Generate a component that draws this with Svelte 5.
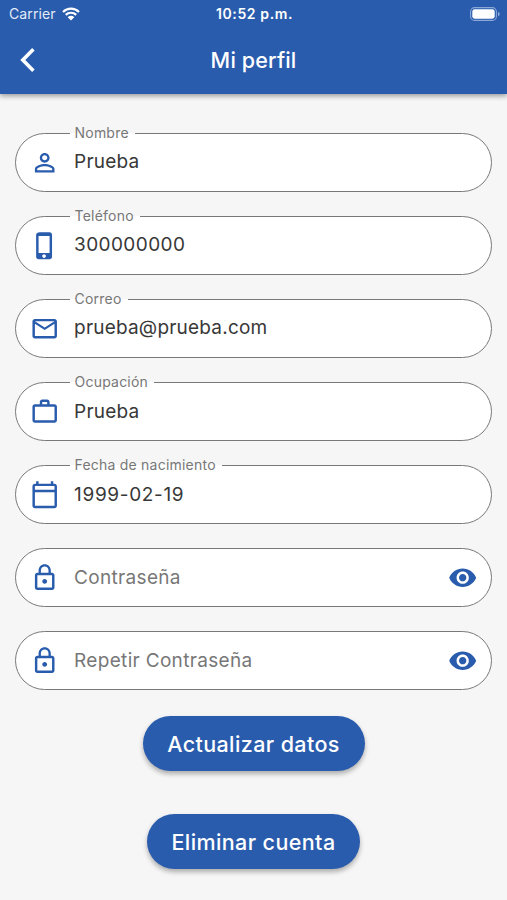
<script lang="ts">
  type Field = {
    name: string;
    label: string;
    value?: string;
    icon: string;
    type: "text" | "tel" | "email" | "date" | "password";
  };

  const icons = {
    person:
      "M12 5.9c1.16 0 2.1.94 2.1 2.1s-.94 2.1-2.1 2.1S9.9 9.16 9.9 8s.94-2.1 2.1-2.1m0 9c2.97 0 6.1 1.46 6.1 2.1v1.1H5.9V17c0-.64 3.13-2.1 6.1-2.1M12 4C9.79 4 8 5.79 8 8s1.79 4 4 4 4-1.79 4-4-1.79-4-4-4zm0 9c-2.67 0-8 1.34-8 4v3h16v-3c0-2.66-5.33-4-8-4z",
    phone:
      "M16 1H8C6.34 1 5 2 5 3v18c0 1.1.9 2 2 2h9c1.1 0 2-.9 2-2V3c0-1.1-.9-2-2-2zm-4.5 21c-.83 0-1.5-.67-1.5-1.5s.67-1.5 1.5-1.5 1.5.67 1.5 1.5-.67 1.5-1.5 1.5zm4.5-4H7V4h9v14z",
    mail: "M20 4H4c-1.1 0-2 .9-2 2v12c0 1.1.9 2 2 2h16c1.1 0 2-.9 2-2V6c0-1.1-.9-2-2-2zm0 14H4V8l8 5 8-5v10zm-8-7L4 6h16l-8 5z",
    work: "M14 6V4h-4v2h4zM4 8v11h16V8H4zm16-2c1.11 0 2 .89 2 2v11c0 1.11-.89 2-2 2H4c-1.11 0-2-.89-2-2V8c0-1.11.89-2 2-2h4V4c0-1.11.89-2 2-2h4c1.11 0 2 .89 2 2v2h4z",
    calendar:
      "M20 3h-1V1h-2v2H7V1H5v2H4c-1.1 0-2 .9-2 2v16c0 1.1.9 2 2 2h16c1.1 0 2-.9 2-2V5c0-1.1-.9-2-2-2zm0 18H4V10h16v11zm0-13H4V5h16v3z",
    lock: "M12 17c1.1 0 2-.9 2-2s-.9-2-2-2-2 .9-2 2 .9 2 2 2zm6-9h-1V6c0-2.76-2.24-5-5-5S7 3.24 7 6v2H6c-1.1 0-2 .9-2 2v10c0 1.1.9 2 2 2h12c1.1 0 2-.9 2-2V10c0-1.1-.9-2-2-2zM8.9 6c0-1.71 1.39-3.1 3.1-3.1s3.1 1.39 3.1 3.1v2H8.9V6zM18 20H6V10h12v10z",
    eye: "M12 4.5C7 4.5 2.73 7.61 1 12c1.73 4.39 6 7.5 11 7.5s9.27-3.11 11-7.5c-1.73-4.39-6-7.5-11-7.5zM12 17c-2.76 0-5-2.24-5-5s2.24-5 5-5 5 2.24 5 5-2.24 5-5 5zm0-8c-1.66 0-3 1.34-3 3s1.34 3 3 3 3-1.34 3-3-1.34-3-3-3z",
  };

  const fields: Field[] = $state([
    { name: "nombre", label: "Nombre", value: "Prueba", icon: icons.person, type: "text" },
    { name: "telefono", label: "Teléfono", value: "300000000", icon: icons.phone, type: "tel" },
    { name: "correo", label: "Correo", value: "prueba@prueba.com", icon: icons.mail, type: "email" },
    { name: "ocupacion", label: "Ocupación", value: "Prueba", icon: icons.work, type: "text" },
    { name: "nacimiento", label: "Fecha de nacimiento", value: "1999-02-19", icon: icons.calendar, type: "date" },
    { name: "clave", label: "Contraseña", value: "", icon: icons.lock, type: "password" },
    { name: "clave2", label: "Repetir Contraseña", value: "", icon: icons.lock, type: "password" },
  ]);

  let visible: Record<string, boolean> = $state({});

  // dates stay as plain ISO text, without the browser's date picker
  function inputType(field: Field) {
    return field.type === "password" && !visible[field.name] ? "password" : "text";
  }
</script>

{#snippet icon(path: string)}
  <svg class="icon" viewBox="0 0 24 24" aria-hidden="true"><path d={path} /></svg>
{/snippet}

<div class="screen">
  <header class="header">
    <div class="status">
      <div class="carrier">
        <span>Carrier</span>
        <svg class="wifi" viewBox="0 0 18 14" aria-hidden="true">
          <path d="M1 5a11.3 11.3 0 0 1 16 0M3.8 7.9a7.4 7.4 0 0 1 10.4 0" />
          <path class="wifi-dot" d="M9 13.6 5.7 10.2a4.7 4.7 0 0 1 6.6 0z" />
        </svg>
      </div>
      <span class="time">10:52 p.m.</span>
      <svg class="battery" viewBox="0 0 30 14" aria-hidden="true">
        <rect class="battery-shell" x=".6" y=".6" width="25.8" height="12.8" rx="4" />
        <rect x="2.3" y="2.3" width="22.4" height="9.4" rx="2.4" />
        <path class="battery-cap" d="M28 4.7c2.3.8 2.3 3.8 0 4.6z" />
      </svg>
    </div>
    <div class="bar">
      <button class="back" aria-label="Volver">
        <svg viewBox="0 0 16 26" aria-hidden="true"><path d="M13.4 2.2 2.8 13l10.6 10.8" /></svg>
      </button>
      <h1 class="title">Mi perfil</h1>
    </div>
  </header>

  <main class="content">
    {#each fields as field (field.name)}
      <fieldset class="field">
        {#if field.value}
          <legend>{field.label}</legend>
        {/if}
        <div class="row">
          {@render icon(field.icon)}
          <input
            class={field.type}
            type={inputType(field)}
            name={field.name}
            aria-label={field.label}
            placeholder={field.label}
            bind:value={field.value}
          />
          {#if field.type === "password"}
            <button
              class="toggle"
              aria-label="Mostrar contraseña"
              onclick={() => (visible[field.name] = !visible[field.name])}
            >
              {@render icon(icons.eye)}
            </button>
          {/if}
        </div>
      </fieldset>
    {/each}

    <div class="actions">
      <button class="action update">Actualizar datos</button>
      <button class="action delete">Eliminar cuenta</button>
    </div>
  </main>
</div>

<style>
  :global(body) {
    background: #f6f6f6;
  }

  .screen {
    --blue: #295cad;
    height: 900px;
    overflow: hidden;
    background: #f6f6f6;
    font-family: Inter, "Liberation Sans", sans-serif;
  }

  button {
    padding: 0;
    border: 0;
    background: none;
    color: inherit;
    font: inherit;
  }

  .header {
    height: 94px;
    background: var(--blue);
    color: #fff;
    box-shadow: 0 2px 5px rgb(0 0 0 / 38%);
  }

  .status {
    display: grid;
    grid-template-columns: 1fr auto 1fr;
    align-items: center;
    height: 27px;
    padding: 0 7px 0 9px;
    font-size: 14px;
  }

  .carrier {
    display: flex;
    align-items: center;
    gap: 6px;
    color: #e3ebf7;
    letter-spacing: 0.1px;
  }

  .wifi {
    width: 18px;
    height: 14px;
    fill: none;
    stroke: #fff;
    stroke-width: 2.2;
  }

  .wifi-dot {
    fill: #fff;
    stroke: none;
  }

  .time {
    font-weight: 600;
    letter-spacing: 0.6px;
  }

  .battery {
    justify-self: end;
    width: 30px;
    height: 14px;
    fill: #fff;
  }

  .battery-shell {
    fill: none;
    stroke: #8ba8d6;
    stroke-width: 1.1;
  }

  .battery-cap {
    fill: #8ba8d6;
  }

  .bar {
    display: grid;
    grid-template-columns: 60px 1fr 60px;
    align-items: center;
    height: 66px;
  }

  .back {
    display: flex;
    padding-left: 20px;
  }

  .back svg {
    width: 16px;
    height: 26px;
    fill: none;
    stroke: #fff;
    stroke-width: 3.6;
  }

  .title {
    margin: 0;
    font-size: 21.5px;
    font-weight: 500;
    letter-spacing: 0.15px;
    text-align: center;
  }

  .content {
    display: flex;
    flex-direction: column;
    gap: 24.1px;
    padding: 38.8px 15px 0;
  }

  .field {
    box-sizing: border-box;
    height: 59px;
    min-width: 0;
    margin: 0;
    padding: 0 0 0 54px;
    border: 1px solid #787878;
    border-radius: 30px;
    background: #fff;
  }

  /* 1px tall so the legend only cuts the outline and never moves the row */
  legend {
    height: 1px;
    padding: 0 6px 0 4.5px;
    color: #777;
    font-size: 14px;
    letter-spacing: 0.22px;
    line-height: 0;
    white-space: nowrap;
  }

  .row {
    display: flex;
    align-items: center;
    height: 57px;
    margin-left: -40px;
    padding-right: 14px;
  }

  .icon {
    flex: none;
    width: 29.4px;
    height: 29.4px;
    fill: var(--blue);
  }

  input {
    flex: 1;
    min-width: 0;
    margin: 0 0 0 14.7px;
    padding: 0 0 1px;
    border: 0;
    outline: 0;
    background: none;
    color: #383838;
    font: 19px Inter, "Liberation Sans", sans-serif;
    letter-spacing: 0.2px;
  }

  input::placeholder {
    color: #777;
    opacity: 1;
  }

  .tel {
    letter-spacing: 0.4px;
  }

  .date {
    letter-spacing: 0.65px;
  }

  .password {
    letter-spacing: 0.32px;
  }

  .toggle {
    display: flex;
  }

  .actions {
    display: flex;
    flex-direction: column;
    align-items: center;
    gap: 43px;
    padding-top: 2px;
  }

  .action {
    height: 55px;
    border-radius: 28px;
    background: var(--blue);
    box-shadow: 0 3px 5px rgb(0 0 0 / 30%);
    color: #fff;
    font-size: 21.5px;
    font-weight: 500;
    letter-spacing: 0.4px;
  }

  .update {
    width: 222px;
  }

  .delete {
    width: 213px;
  }
</style>
